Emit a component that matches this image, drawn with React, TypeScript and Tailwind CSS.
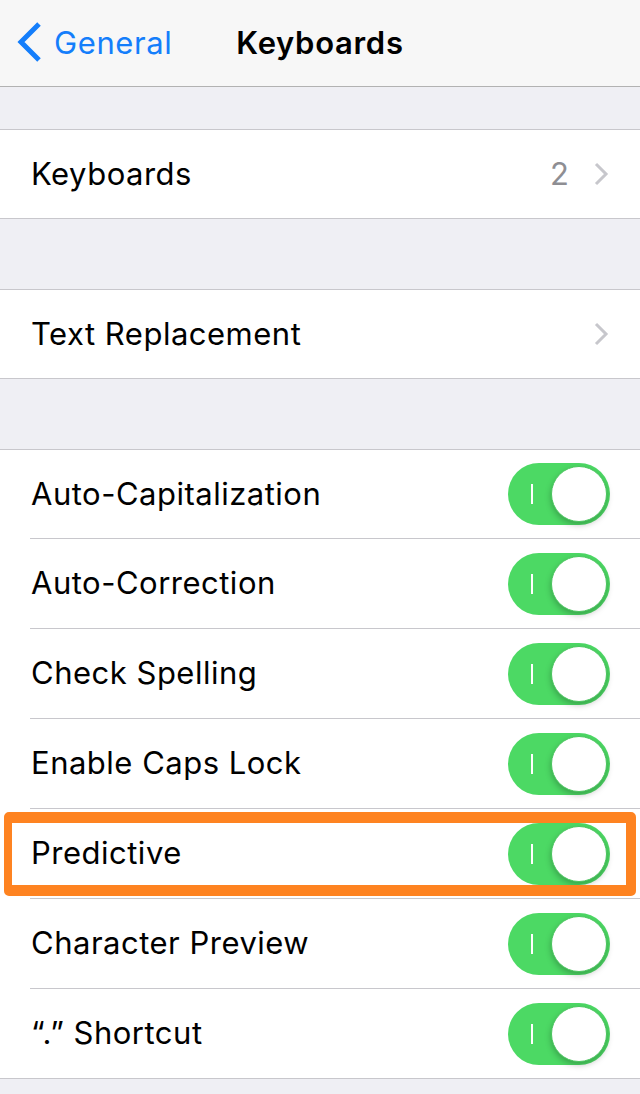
import React from "react";

const font = { fontFamily: "Inter, 'Noto Sans', sans-serif" };

function Toggle() {
  return (
    <div className="relative w-[102px] h-[62px] rounded-full bg-[#4cd964] shrink-0">
      <div className="absolute left-[23px] top-[21px] w-[2px] h-[20px] bg-white" />
      <div className="absolute right-[3px] top-[3px] w-[56px] h-[56px] rounded-full bg-white border border-[#49c55d] shadow-[0_3px_6px_rgba(0,0,0,0.25)]" />
    </div>
  );
}

function Chevron() {
  return (
    <svg width="16" height="26" viewBox="0 0 16 26" className="shrink-0">
      <path d="M3 3 L13 13 L3 23" fill="none" stroke="#c7c7cc" strokeWidth="3" strokeLinecap="butt" strokeLinejoin="miter" />
    </svg>
  );
}

const toggles = [
  "Auto-Capitalization",
  "Auto-Correction",
  "Check Spelling",
  "Enable Caps Lock",
  "Predictive",
  "Character Preview",
  "\u201C.\u201D Shortcut",
];

export default function App() {
  return (
    <div className="w-[640px] h-[1094px] bg-[#efeff4] overflow-hidden relative" style={font}>
      {/* Nav bar */}
      <div className="relative h-[87px] bg-[#f7f7f7] border-b border-[#b2b2b2] flex items-center">
        <div className="flex items-center pl-[16px] -mt-[2px]">
          <svg width="28" height="42" viewBox="0 0 28 42">
            <path d="M23 3 L5 21 L23 39" fill="none" stroke="#147efb" strokeWidth="5" />
          </svg>
          <span className="ml-[10px] text-[31px] text-[#147efb] tracking-[0.6px] leading-none">General</span>
        </div>
        <div className="absolute inset-0 flex items-center justify-center -mt-[2px]">
          <span className="text-[31px] font-semibold text-black leading-none tracking-[0.7px]">Keyboards</span>
        </div>
      </div>

      <div className="h-[42px]" />
      <div className="bg-white border-y border-[#c8c7cc]">
        <div className="h-[88px] flex items-center pl-[31px] pr-[31px]">
          <span className="flex-1 text-[31px] text-black tracking-[0.5px]">Keyboards</span>
          <span className="text-[31px] text-[#8e8e93] mr-[24px]">2</span>
          <Chevron />
        </div>
      </div>

      <div className="h-[70px]" />
      <div className="bg-white border-y border-[#c8c7cc]">
        <div className="h-[88px] flex items-center pl-[31px] pr-[31px]">
          <span className="flex-1 text-[31px] text-black tracking-[0.5px]">Text Replacement</span>
          <Chevron />
        </div>
      </div>

      <div className="h-[70px]" />
      <div className="bg-white border-y border-[#c8c7cc]">
        {toggles.map((t, i) => (
          <div key={t}>
            <div className={(i === 0 ? "h-[88px]" : "h-[89px]") + " flex items-center pl-[31px] pr-[30px]"}>
              <span className="flex-1 text-[31px] text-black tracking-[0.5px]">{t}</span>
              <Toggle />
            </div>
            {i < toggles.length - 1 && <div className="ml-[30px] h-px bg-[#c8c7cc]" />}
          </div>
        ))}
      </div>

      {/* Orange highlight */}
      <div className="absolute left-[4px] top-[812px] w-[632px] h-[84px] border-[#fe8321] border-l-[8px] border-r-[10px] border-y-[11px] rounded-[5px]" />
    </div>
  );
}
